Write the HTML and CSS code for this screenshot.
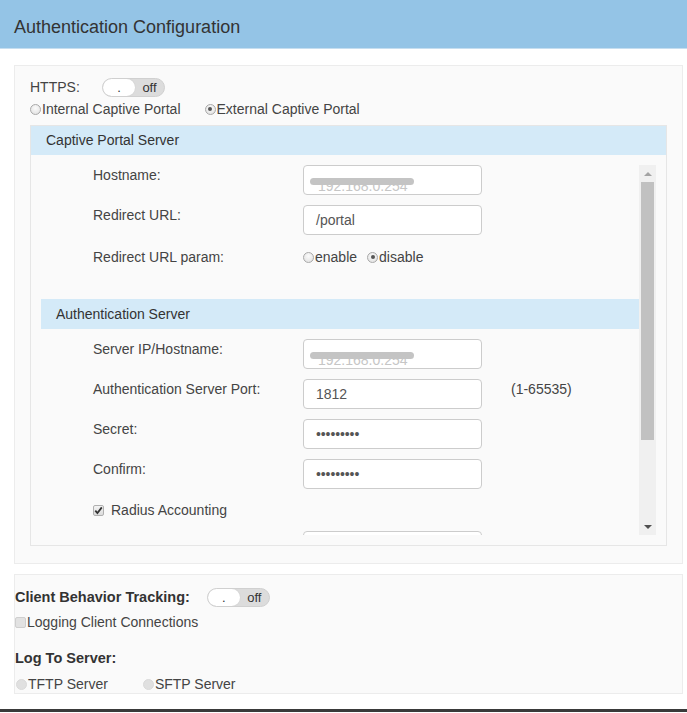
FILE: index.html
```html
<!DOCTYPE html>
<html>
<head>
<meta charset="utf-8">
<link rel="stylesheet" href="styles.css">
</head>
<body>
<header class="page-header"><h1 class="page-title">Authentication Configuration</h1></header>
<main class="content">
  <section class="panel panel-auth">
    <div class="line https-row">
      <span class="https-label">HTTPS:</span>
      <span class="toggle"><span class="knob">.</span><span class="toggle-text">off</span></span>
    </div>
    <div class="line portal-row">
      <span class="opt"><span class="radio"></span>Internal Captive Portal</span>
      <span class="opt opt-gap"><span class="radio checked"></span>External Captive Portal</span>
    </div>
    <div class="box">
      <div class="box-head">Captive Portal Server</div>
      <div class="scroll-wrap">
        <div class="scroll-content">
          <div class="form-row">
            <span class="form-label">Hostname:</span>
            <div class="field"><span class="masked">192.168.0.254</span></div>
          </div>
          <div class="form-row">
            <span class="form-label">Redirect URL:</span>
            <div class="field">/portal</div>
          </div>
          <div class="form-row param-row">
            <span class="form-label">Redirect URL param:</span>
            <span class="opt"><span class="radio"></span>enable</span>
            <span class="opt opt-small-gap"><span class="radio checked"></span>disable</span>
          </div>
          <div class="sub-head">Authentication Server</div>
          <div class="form-row">
            <span class="form-label">Server IP/Hostname:</span>
            <div class="field"><span class="masked">192.168.0.254</span></div>
          </div>
          <div class="form-row">
            <span class="form-label">Authentication Server Port:</span>
            <div class="field">1812</div>
            <span class="hint">(1-65535)</span>
          </div>
          <div class="form-row">
            <span class="form-label">Secret:</span>
            <div class="field dots">&#8226;&#8226;&#8226;&#8226;&#8226;&#8226;&#8226;&#8226;&#8226;</div>
          </div>
          <div class="form-row">
            <span class="form-label">Confirm:</span>
            <div class="field dots">&#8226;&#8226;&#8226;&#8226;&#8226;&#8226;&#8226;&#8226;&#8226;</div>
          </div>
          <div class="check-row">
            <span class="checkbox checked"><svg viewBox="0 0 11 11" width="11" height="11"><path d="M2.3 5.6 L4.4 8 L8.8 2.4" fill="none" stroke="#333" stroke-width="1.8"/></svg></span>
            <span class="check-text">Radius Accounting</span>
          </div>
          <div class="form-row">
            <span class="form-label"></span>
            <div class="field"></div>
          </div>
        </div>
        <div class="scrollbar">
          <div class="sb-btn"><span class="arrow-up"></span></div>
          <div class="sb-thumb"></div>
          <div class="sb-space"></div>
          <div class="sb-btn"><span class="arrow-down"></span></div>
        </div>
      </div>
    </div>
  </section>
  <section class="panel panel-track">
    <div class="line track-row">
      <span class="bold">Client Behavior Tracking:</span>
      <span class="toggle toggle-track"><span class="knob">.</span><span class="toggle-text">off</span></span>
    </div>
    <div class="line logging-row">
      <span class="checkbox plain"></span>Logging Client Connections
    </div>
    <div class="line logto-row"><span class="bold">Log To Server:</span></div>
    <div class="line server-row">
      <span class="opt"><span class="radio light"></span>TFTP Server</span>
      <span class="opt opt-wide-gap"><span class="radio light"></span>SFTP Server</span>
    </div>
  </section>
</main>
<div class="bottom-edge"></div>
</body>
</html>
```

FILE: styles.css
```css
* { box-sizing: border-box; }
html, body { margin: 0; padding: 0; }
body {
  width: 687px;
  height: 713px;
  overflow: hidden;
  background: #ffffff;
  font-family: "Liberation Sans", Arial, sans-serif;
  font-size: 14px;
  color: #444444;
}
.page-header {
  height: 49px;
  background: #94c4e6;
  border-bottom: 1px solid #c6def0;
}
.page-title {
  margin: 0;
  padding: 7px 0 0 14px;
  font-size: 18px;
  font-weight: normal;
  line-height: 41px;
  color: #333333;
}
.content {
  padding: 16px 4px 0 14px;
}
.panel {
  background: #fafafa;
  border: 1px solid #ececec;
}
.panel-auth {
  padding: 11px 15px 17px 15px;
}
.line {
  display: flex;
  align-items: center;
  height: 20px;
  line-height: 20px;
}
.https-label { width: 72px; }
.toggle {
  display: inline-flex;
  width: 63px;
  height: 19px;
  border: 1px solid #d0d0d0;
  border-radius: 10px;
  background: #dcdcdc;
  font-size: 13px;
  line-height: 17px;
  color: #333;
  overflow: hidden;
}
.knob {
  width: 32px;
  height: 17px;
  background: #ffffff;
  border-radius: 9px;
  text-align: center;
  box-shadow: 0 0 0 1px #d8d8d8;
}
.toggle-text {
  flex: 1;
  text-align: center;
}
.portal-row { margin-top: 2px; margin-bottom: 6px; }
.opt {
  display: inline-flex;
  align-items: center;
  white-space: nowrap;
}
.opt-gap { margin-left: 24px; }
.opt-small-gap { margin-left: 10px; }
.opt-wide-gap { margin-left: 35px; }
.radio {
  display: inline-block;
  width: 11px;
  height: 11px;
  margin-right: 1px;
  border-radius: 50%;
  border: 1px solid #a9a9a9;
  background: radial-gradient(circle at 50% 35%, #fbfbfb 0%, #dedede 100%);
  position: relative;
}
.radio.checked::after {
  content: "";
  position: absolute;
  left: 2.5px;
  top: 2.5px;
  width: 4px;
  height: 4px;
  border-radius: 50%;
  background: #555555;
}
.radio.light {
  border-color: #dadada;
  background: #e0e0e0;
}
.box {
  border: 1px solid #e6e6e6;
  background: #fafafa;
}
.box-head {
  height: 29px;
  line-height: 29px;
  padding-left: 15px;
  background: #d4eaf8;
  color: #333333;
}
.scroll-wrap {
  display: flex;
  margin: 10px;
  height: 370px;
}
.scroll-content {
  flex: 1;
  overflow: hidden;
}
.form-row {
  display: flex;
  align-items: flex-start;
  margin-bottom: 10px;
  line-height: 20px;
}
.form-label {
  width: 262px;
  padding-left: 52px;
  flex: none;
}
.field {
  width: 179px;
  height: 30px;
  flex: none;
  border: 1px solid #cccccc;
  border-radius: 4px;
  background: #ffffff;
  padding: 0 12px;
  line-height: 28px;
  color: #555555;
  white-space: nowrap;
  overflow: hidden;
}
.field.dots {
  font-size: 14px;
  letter-spacing: -0.1px;
  color: #555;
}
.masked {
  position: relative;
  color: #c6c6c6;
  display: inline-block;
  line-height: 28px;
  padding-top: 6px;
  margin-left: 2px;
}
.masked::after {
  content: "";
  position: absolute;
  left: -8px;
  right: -6px;
  top: 12px;
  height: 7px;
  border-radius: 3.5px;
  background: #c4c4c4;
  filter: blur(0.6px);
}
.hint {
  margin-left: 29px;
  color: #444;
}
.param-row { margin-bottom: 32px; padding-top: 2px; }
.param-row .opt { height: 20px; }
.sub-head {
  height: 30px;
  line-height: 30px;
  padding-left: 15px;
  background: #d4eaf8;
  color: #333333;
  margin-bottom: 10px;
}
.check-row {
  display: flex;
  align-items: center;
  height: 20px;
  padding-left: 52px;
  margin-top: 11px;
  margin-bottom: 11px;
}
.checkbox {
  display: inline-block;
  width: 11px;
  height: 11px;
  border: 1px solid #b0b0b0;
  border-radius: 2px;
  background: linear-gradient(#f4f4f4, #dcdcdc);
  flex: none;
}
.checkbox svg { display: block; margin: -1px 0 0 -1px; }
.check-text { margin-left: 7px; }
.checkbox.plain {
  border-color: #cfcfcf;
  background: #e2e2e2;
  margin-right: 1px;
}
.scrollbar {
  width: 17px;
  flex: none;
  display: flex;
  flex-direction: column;
  background: #f0f0f0;
}
.sb-btn {
  height: 17px;
  display: flex;
  align-items: center;
  justify-content: center;
}
.arrow-up {
  width: 0;
  height: 0;
  border-left: 4px solid transparent;
  border-right: 4px solid transparent;
  border-bottom: 4px solid #a3a3a3;
}
.arrow-down {
  width: 0;
  height: 0;
  border-left: 4px solid transparent;
  border-right: 4px solid transparent;
  border-top: 4px solid #505050;
}
.sb-thumb {
  height: 258px;
  margin: 0 2px;
  background: #c1c1c1;
}
.sb-space { flex: 1; }
.panel-track {
  margin-top: 10px;
  height: 120px;
  padding: 12px 0 0 0;
}
.bold {
  font-weight: bold;
  font-size: 14.5px;
  color: #333333;
}
.toggle-track { margin-left: 17px; }
.logging-row { margin-top: 5px; }
.logto-row { margin-top: 16px; }
.server-row { margin-top: 6px; padding-left: 1px; }
.bottom-edge {
  margin-top: 15px;
  height: 3px;
  background: #3a3a3a;
}
```
